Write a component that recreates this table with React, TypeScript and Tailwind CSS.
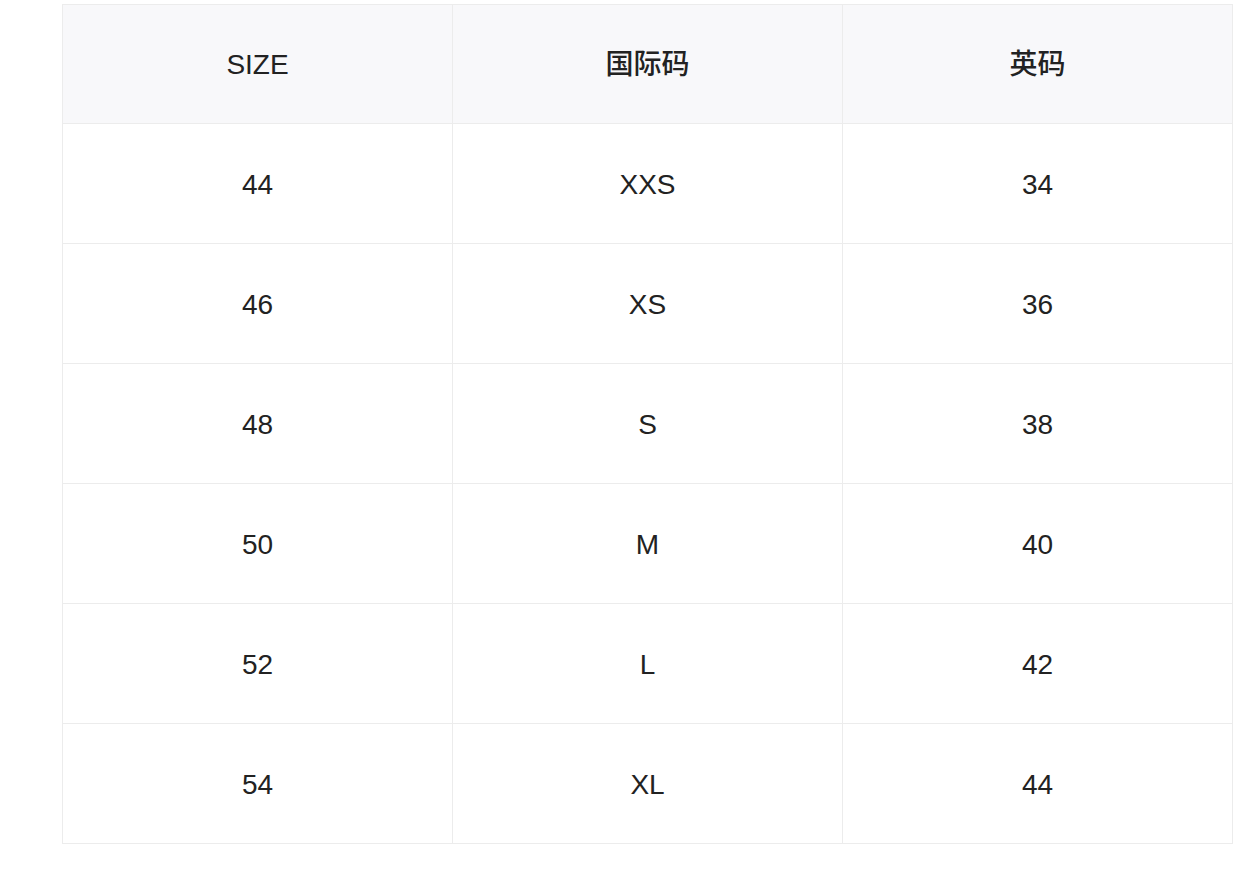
const rows = [
  ['44', 'XXS', '34'],
  ['46', 'XS', '36'],
  ['48', 'S', '38'],
  ['50', 'M', '40'],
  ['52', 'L', '42'],
  ['54', 'XL', '44'],
];

const headers = ['SIZE', '国际码', '英码'];

export default function App() {
  return (
    <div
      className="min-h-screen bg-white pt-[4px] pl-[62px]"
      style={{ fontFamily: '"Liberation Sans", "Noto Sans CJK SC", sans-serif' }}
    >
      <table className="w-[1171px] border-collapse table-fixed text-[#222222]">
        <thead>
          <tr className="bg-[#f8f8fa]">
            {headers.map((h) => (
              <th
                key={h}
                className="h-[119px] pt-[2px] border border-[#ececec] text-[28px] font-medium text-center"
              >
                {h}
              </th>
            ))}
          </tr>
        </thead>
        <tbody>
          {rows.map((r) => (
            <tr key={r[0]}>
              {r.map((c, i) => (
                <td
                  key={i}
                  className="h-[120px] pt-[2px] border border-[#ececec] text-[28px] font-normal text-center"
                >
                  {c}
                </td>
              ))}
            </tr>
          ))}
        </tbody>
      </table>
    </div>
  );
}
